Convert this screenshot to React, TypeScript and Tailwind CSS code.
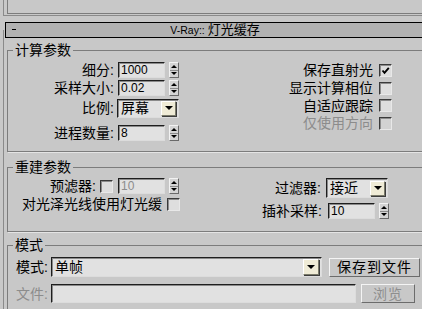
import React from "react";

const FONT = "font-['Liberation_Sans','Noto_Sans_CJK_SC',sans-serif]";

function Sunken({ className = "", children }: { className?: string; children?: React.ReactNode }) {
  return (
    <div
      className={`bg-[#e1e1e1] border-t border-l border-t-[#1e1e1e] border-l-[#1e1e1e] border-r border-b border-r-[#dcdcdc] border-b-[#dcdcdc] shadow-[inset_1px_1px_0_#8a8a8a] ${className}`}
    >
      {children}
    </div>
  );
}

function NumInput({ value, disabled = false, w = "w-[47px]" }: { value: string; disabled?: boolean; w?: string }) {
  return (
    <Sunken className={`${w} h-[16px] flex items-center pl-[2px] overflow-hidden`}>
      <span className={`text-[12px] leading-[14px] font-['Liberation_Sans',sans-serif] ${disabled ? "text-[#8c8c8c]" : "text-black"}`}>
        {value}
      </span>
    </Sunken>
  );
}

function Spinner() {
  return (
    <div className="w-[10px] h-[16px] flex flex-col bg-[#d4d4d4] border border-t-[#f2f2f2] border-l-[#f2f2f2] border-r-[#6a6a6a] border-b-[#6a6a6a]">
      <div className="flex-1 flex items-center justify-center border-b border-b-[#8a8a8a]">
        <div className="w-0 h-0 border-x-[3px] border-x-transparent border-b-[3px] border-b-black" />
      </div>
      <div className="flex-1 flex items-center justify-center">
        <div className="w-0 h-0 border-x-[3px] border-x-transparent border-t-[3px] border-t-black" />
      </div>
    </div>
  );
}

function Checkbox({ checked = false, disabled = false }: { checked?: boolean; disabled?: boolean }) {
  return (
    <div
      className={`w-[13px] h-[13px] flex items-center justify-center border-t border-l border-t-[#3a3a3a] border-l-[#3a3a3a] border-r border-b border-r-[#e8e8e8] border-b-[#e8e8e8] shadow-[inset_1px_1px_0_#8c8c8c] ${
        disabled ? "bg-[#d2d2d2]" : "bg-[#dedede]"
      }`}
    >
      {checked && (
        <svg width="9" height="9" viewBox="0 0 9 9">
          <polyline points="1.5,4.5 3.5,6.8 7.8,1.8" fill="none" stroke="#000" strokeWidth="1.9" />
        </svg>
      )}
    </div>
  );
}

function DropBtn({ size = "w-[15px] h-[15px]" }: { size?: string }) {
  return (
    <div className={`${size} shrink-0 flex items-center justify-center bg-[#efebd6] border border-t-[#ffffff] border-l-[#ffffff] border-r-[#7a7a6a] border-b-[#7a7a6a] shadow-[1px_1px_0_#3c3c3c]`}>
      <div className="w-0 h-0 border-x-[4px] border-x-transparent border-t-[4px] border-t-black" />
    </div>
  );
}

function Select({ value, w, h = "h-[19px]", btn }: { value: string; w: string; h?: string; btn?: string }) {
  return (
    <Sunken className={`${w} ${h} flex items-center justify-between pl-[3px] pr-[2px]`}>
      <span className="text-[14px] leading-[16px] text-black">{value}</span>
      <DropBtn size={btn} />
    </Sunken>
  );
}

function Group({ label, className = "", children }: { label: string; className?: string; children?: React.ReactNode }) {
  return (
    <div className={`relative border border-t-[#7c7c7c] border-l-[#7c7c7c] border-b-[#7c7c7c] border-r-[#7c7c7c] shadow-[1px_1px_0_#e4e4e4] ${className}`}>
      <div className="absolute -top-[9px] left-[5px] px-[2px] bg-[#c8c8c8] text-[14px] leading-[16px] text-black">{label}</div>
      {children}
    </div>
  );
}

function Button({ label, disabled = false, className = "" }: { label: string; disabled?: boolean; className?: string }) {
  return (
    <div
      className={`flex items-center justify-center bg-[#c8c8c8] border border-t-[#f4f4f4] border-l-[#f4f4f4] border-r-[#6c6c6c] border-b-[#6c6c6c] text-[14px] leading-[16px] tracking-[1px] ${
        disabled ? "text-[#8e8e8e]" : "text-black"
      } ${className}`}
    >
      {label}
    </div>
  );
}

export default function App() {
  return (
    <div className={`w-[422px] h-[309px] overflow-hidden bg-[#c8c8c8] ${FONT} text-black select-none`}>
      {/* previous rollout stub */}
      <div className="ml-[3px] h-[16px] w-[430px] border-l border-b border-l-[#8a8a8a] border-b-[#8a8a8a]">
        <div className="ml-[3px] h-[14px] border-l border-b border-l-[#7c7c7c] border-b-[#7c7c7c]" />
      </div>

      {/* rollout */}
      <div className="mt-[14px] ml-[3px] w-[430px] flex flex-col border-l border-l-[#8a8a8a] pl-[1px]">
        <div className="-mt-[8px] w-[420px] h-[16px] border border-black bg-[#b2b2b2] flex items-center relative">
          <div className="absolute left-[6px] top-[6px] w-[4px] h-[1px] bg-black" />
          <div className="w-full flex justify-center items-center">
            <span className="text-[10.5px] leading-[14px] font-['Liberation_Sans',sans-serif]">V-Ray::&nbsp;</span>
            <span className="text-[13px] leading-[14px]">灯光缓存</span>
          </div>
        </div>

        {/* 计算参数 */}
        <Group label="计算参数" className="mt-[12px] ml-[2px] w-[420px] h-[102px]">
          <div className="flex justify-between pt-[10px] pr-[34px]">
            <div className="flex flex-col">
              <div className="h-[18px] flex items-center">
                <div className="w-[106px] text-right text-[14px] leading-[16px]">细分:</div>
                <div className="ml-[4px]"><NumInput value="1000" /></div>
                <div className="ml-[4px]"><Spinner /></div>
              </div>
              <div className="h-[18px] flex items-center">
                <div className="w-[106px] text-right text-[14px] leading-[16px]">采样大小:</div>
                <div className="ml-[4px]"><NumInput value="0.02" /></div>
                <div className="ml-[4px]"><Spinner /></div>
              </div>
              <div className="h-[18px] mt-[2px] flex items-center">
                <div className="w-[106px] text-right text-[14px] leading-[16px]">比例:</div>
                <div className="ml-[3px]"><Select value="屏幕" w="w-[62px]" h="h-[19px]" /></div>
              </div>
              <div className="h-[18px] mt-[7px] flex items-center">
                <div className="w-[106px] text-right text-[14px] leading-[16px]">进程数量:</div>
                <div className="ml-[4px]"><NumInput value="8" /></div>
                <div className="ml-[4px]"><Spinner /></div>
              </div>
            </div>
            <div className="flex flex-col items-end">
              <div className="h-[18px] flex items-center">
                <span className="text-[14px] leading-[16px]">保存直射光</span>
                <div className="ml-[6px]"><Checkbox checked /></div>
              </div>
              <div className="h-[18px] flex items-center">
                <span className="text-[14px] leading-[16px]">显示计算相位</span>
                <div className="ml-[6px]"><Checkbox /></div>
              </div>
              <div className="h-[17px] flex items-center">
                <span className="text-[14px] leading-[16px]">自适应跟踪</span>
                <div className="ml-[6px]"><Checkbox /></div>
              </div>
              <div className="h-[18px] flex items-center">
                <span className="text-[14px] leading-[16px] text-[#8c8c8c]">仅使用方向</span>
                <div className="ml-[6px]"><Checkbox disabled /></div>
              </div>
            </div>
          </div>
        </Group>

        {/* 重建参数 */}
        <Group label="重建参数" className="mt-[15px] ml-[2px] w-[420px] h-[65px]">
          <div className="flex justify-between pr-[37px]">
            <div className="flex flex-col pt-[9px]">
              <div className="h-[18px] flex items-center">
                <div className="w-[88px] text-right text-[14px] leading-[16px]">预滤器:</div>
                <div className="ml-[4px]"><Checkbox /></div>
                <div className="ml-[5px]"><NumInput value="10" disabled /></div>
                <div className="ml-[4px]"><Spinner /></div>
              </div>
              <div className="h-[18px] flex items-center pl-[14px]">
                <span className="text-[14px] leading-[16px]">对光泽光线使用灯光缓</span>
                <div className="ml-[5px]"><Checkbox /></div>
              </div>
            </div>
            <div className="flex flex-col pt-[10px]">
              <div className="h-[20px] flex items-center justify-end">
                <span className="text-[14px] leading-[16px]">过滤器:</span>
                <div className="ml-[5px]"><Select value="接近" w="w-[62px]" h="h-[20px]" /></div>
                <div className="w-[1px]" />
              </div>
              <div className="h-[18px] mt-[4px] flex items-center justify-end">
                <span className="text-[14px] leading-[16px]">插补采样:</span>
                <div className="ml-[6px]"><NumInput value="10" /></div>
                <div className="ml-[4px]"><Spinner /></div>
              </div>
            </div>
          </div>
        </Group>

        {/* 模式 */}
        <Group label="模式" className="mt-[13px] ml-[2px] w-[420px] h-[80px]">
          <div className="flex flex-col pt-[11px]">
            <div className="h-[20px] flex items-center">
              <div className="w-[43px] pl-[8px] text-[14px] leading-[16px]">模式:</div>
              <Select value="单帧" w="w-[271px]" h="h-[20px]" btn="w-[16px] h-[16px]" />
              <Button label="保存到文件" className="ml-[7px] w-[91px] h-[19px]" />
            </div>
            <div className="h-[19px] mt-[7px] flex items-center">
              <div className="w-[43px] pl-[8px] text-[14px] leading-[16px] text-[#8c8c8c]">文件:</div>
              <Sunken className="w-[305px] h-[19px]" />
              <Button label="浏览" disabled className="ml-[5px] w-[54px] h-[19px]" />
            </div>
          </div>
        </Group>
      </div>
    </div>
  );
}
